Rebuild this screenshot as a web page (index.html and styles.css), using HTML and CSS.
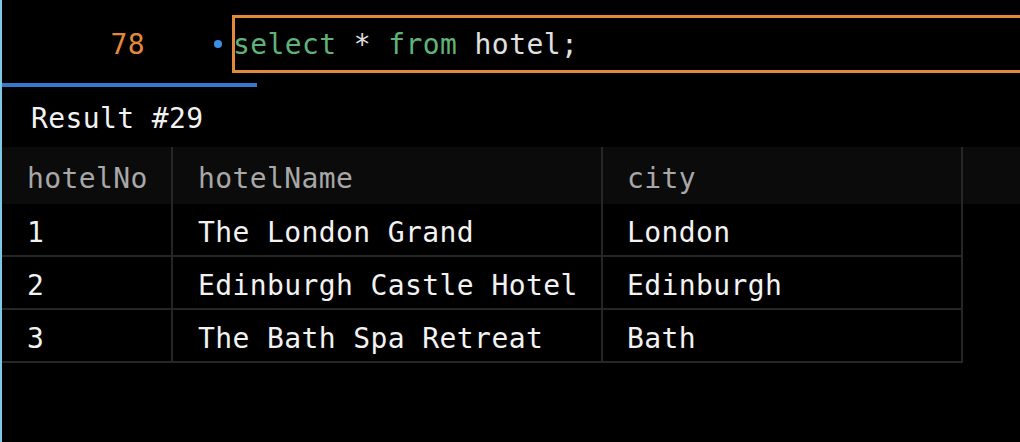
FILE: index.html
```html
<!DOCTYPE html>
<html>
<head>
<meta charset="utf-8">
<link rel="stylesheet" href="styles.css">
</head>
<body>
<div class="app">
  <div class="editor">
    <div class="gutter">
      <span class="lineno">78</span>
      <span class="dot"></span>
    </div>
    <div class="code"><span class="kw">select</span> * <span class="kw">from</span> hotel;</div>
  </div>
  <div class="tabline"></div>
  <div class="result-title">Result #29</div>
  <div class="grid">
    <div class="head-row">
      <div class="cell c1">hotelNo</div>
      <div class="cell c2">hotelName</div>
      <div class="cell c3">city</div>
    </div>
    <div class="row">
      <div class="cell c1">1</div>
      <div class="cell c2">The London Grand</div>
      <div class="cell c3">London</div>
    </div>
    <div class="row">
      <div class="cell c1">2</div>
      <div class="cell c2">Edinburgh Castle Hotel</div>
      <div class="cell c3">Edinburgh</div>
    </div>
    <div class="row">
      <div class="cell c1">3</div>
      <div class="cell c2">The Bath Spa Retreat</div>
      <div class="cell c3">Bath</div>
    </div>
  </div>
</div>
</body>
</html>
```
FILE: styles.css
```css
html, body {
  margin: 0;
  padding: 0;
  background: #000;
  overflow: hidden;
}
.app {
  width: 1018px;
  height: 442px;
  border-left: 2px solid #7ec8e3;
  background: #000;
  font-family: "DejaVu Sans Mono", "Liberation Mono", monospace;
  font-size: 28px;
  letter-spacing: 0.4px;
  color: #f2f2f2;
  overflow: hidden;
}
.editor {
  display: flex;
  padding-top: 15px;
  height: 68px;
}
.gutter {
  flex: none;
  width: 230px;
  display: flex;
  align-items: center;
  height: 58px;
}
.lineno {
  flex: none;
  color: #e38a3a;
  width: 143px;
  text-align: right;
}
.dot {
  flex: none;
  width: 8px;
  height: 8px;
  border-radius: 50%;
  background: #3d8fe6;
  margin-left: 69px;
  margin-top: -1px;
}
.code {
  flex: none;
  width: 800px;
  height: 52px;
  border: 3px solid #e38a3a;
  line-height: 54px;
  text-indent: -2px;
  color: #e0e0e0;
}
.kw {
  color: #5fb37a;
}
.tabline {
  width: 255px;
  height: 4px;
  background: #3578d0;
}
.result-title {
  padding: 17px 0 0 29px;
  height: 43px;
  line-height: 30px;
}
.grid {
  display: flex;
  flex-direction: column;
}
.head-row, .row {
  display: grid;
  grid-template-columns: 169px 430px 362px;
}
.head-row {
  background: #0b0b0b;
  height: 57px;
  color: #a8a8a8;
}
.row {
  width: 961px;
  height: 51px;
  border-bottom: 2px solid #262626;
}
.cell {
  display: flex;
  align-items: center;
  padding-left: 25px;
  padding-top: 6px;
}
.head-row .cell {
  padding-top: 5px;
}
.c2, .c3 {
  border-left: 2px solid #262626;
}
.c3 {
  padding-left: 24px;
  border-right: 2px solid #262626;
}
```
